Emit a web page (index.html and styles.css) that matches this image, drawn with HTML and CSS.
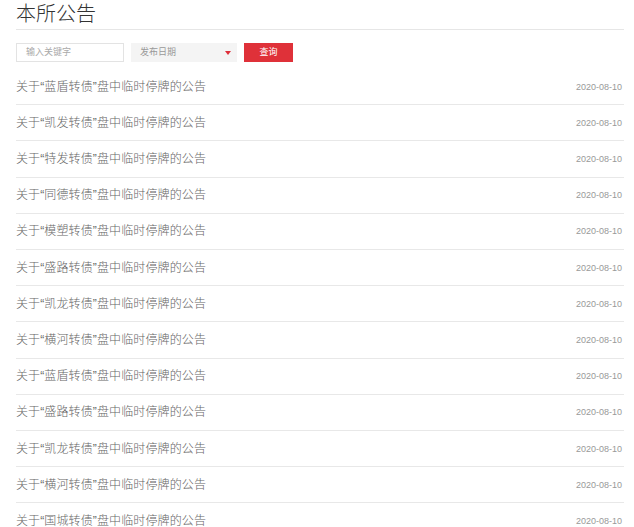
FILE: index.html
```html
<!DOCTYPE html>
<html lang="zh-CN">
<head>
<meta charset="utf-8">
<title>本所公告</title>
<link rel="stylesheet" href="styles.css">
</head>
<body>
<div class="page">
  <h1 class="title">本所公告</h1>
  <div class="search">
    <div class="input">输入关键字</div>
    <div class="select"><span>发布日期</span><i class="caret"></i></div>
    <button class="btn">查询</button>
  </div>
  <ul class="list">
    <li><a>关于“蓝盾转债”盘中临时停牌的公告</a><span class="date">2020-08-10</span></li>
    <li><a>关于“凯发转债”盘中临时停牌的公告</a><span class="date">2020-08-10</span></li>
    <li><a>关于“特发转债”盘中临时停牌的公告</a><span class="date">2020-08-10</span></li>
    <li><a>关于“同德转债”盘中临时停牌的公告</a><span class="date">2020-08-10</span></li>
    <li><a>关于“模塑转债”盘中临时停牌的公告</a><span class="date">2020-08-10</span></li>
    <li><a>关于“盛路转债”盘中临时停牌的公告</a><span class="date">2020-08-10</span></li>
    <li><a>关于“凯龙转债”盘中临时停牌的公告</a><span class="date">2020-08-10</span></li>
    <li><a>关于“横河转债”盘中临时停牌的公告</a><span class="date">2020-08-10</span></li>
    <li><a>关于“蓝盾转债”盘中临时停牌的公告</a><span class="date">2020-08-10</span></li>
    <li><a>关于“盛路转债”盘中临时停牌的公告</a><span class="date">2020-08-10</span></li>
    <li><a>关于“凯龙转债”盘中临时停牌的公告</a><span class="date">2020-08-10</span></li>
    <li><a>关于“横河转债”盘中临时停牌的公告</a><span class="date">2020-08-10</span></li>
    <li><a>关于“国城转债”盘中临时停牌的公告</a><span class="date">2020-08-10</span></li>
  </ul>
</div>
</body>
</html>
```
FILE: styles.css
```css
* { box-sizing: border-box; }
html, body { margin: 0; padding: 0; background: #fff; }
body {
  font-family: "Liberation Sans", "Noto Sans CJK SC", sans-serif;
  color: #666;
}
.page {
  padding: 0 10px 0 16px;
}
.title {
  margin: 0;
  font-size: 20px;
  font-weight: 300;
  color: #333;
  line-height: 29px;
  height: 30px;
  border-bottom: 1px solid #e6e6e6;
}
.search {
  display: flex;
  align-items: center;
  gap: 7px;
  margin-top: 13px;
  height: 19px;
}
.input {
  width: 108px;
  height: 19px;
  border: 1px solid #e3e3e3;
  font-size: 9px;
  color: #aaa;
  line-height: 17px;
  padding-left: 9px;
}
.select {
  width: 106px;
  height: 19px;
  background: #f4f4f4;
  font-size: 9px;
  color: #999;
  line-height: 19px;
  padding: 0 6px 0 9px;
  display: flex;
  justify-content: space-between;
  align-items: center;
}
.caret {
  width: 0;
  height: 0;
  border-left: 3.5px solid transparent;
  border-right: 3.5px solid transparent;
  border-top: 4px solid #de2f3a;
}
.btn {
  width: 49px;
  height: 19px;
  border: 0;
  padding: 0;
  background: #df3139;
  color: #fff;
  font-family: inherit;
  font-size: 9px;
  line-height: 19px;
}
.list {
  list-style: none;
  margin: 7px 0 0;
  padding: 0;
}
.list li {
  display: flex;
  justify-content: space-between;
  align-items: center;
  padding: 8.5px 2px 7.5px 0;
  line-height: 19.2px;
  border-bottom: 1px solid #e8e8e8;
}
.list a {
  font-size: 12px;
  font-weight: 300;
  letter-spacing: 0.12px;
  color: #666;
}
.date {
  font-size: 9px;
  color: #999;
}
```
